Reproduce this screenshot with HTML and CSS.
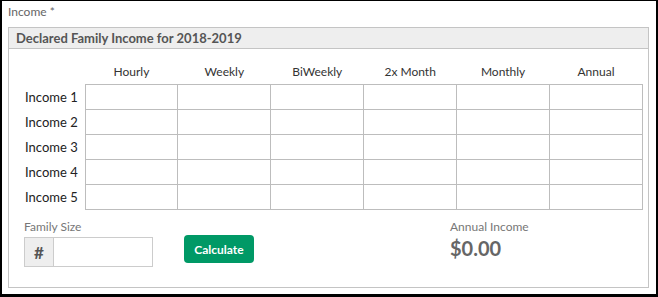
FILE: index.html
```html
<!DOCTYPE html>
<html lang="en">
<head>
    <meta charset="UTF-8">
    <meta name="viewport" content="width=device-width, initial-scale=1.0">
    <link rel="stylesheet" href="styles.css">
    <title>Income</title>
</head>
<body>
    <div class="frame">
        <div class="field-label">Income *</div>

        <div class="panel">
            <div class="panel-heading">Declared Family Income for 2018-2019</div>
            <div class="panel-body">
                <table class="income-table">
                    <thead>
                        <tr>
                            <th class="row-label"></th>
                            <th>Hourly</th>
                            <th>Weekly</th>
                            <th>BiWeekly</th>
                            <th>2x Month</th>
                            <th>Monthly</th>
                            <th>Annual</th>
                        </tr>
                    </thead>
                    <tbody id="income-rows"></tbody>
                </table>

                <div class="calc-row">
                    <div class="family-size">
                        <div class="small-label">Family Size</div>
                        <div class="input-group">
                            <span class="addon">#</span>
                            <input type="text" class="size-input">
                        </div>
                    </div>
                    <div class="calc-btn-wrap">
                        <button class="calc-btn">Calculate</button>
                    </div>
                    <div class="annual">
                        <div class="small-label">Annual Income</div>
                        <div class="annual-value">$0.00</div>
                    </div>
                </div>
            </div>
        </div>
    </div>

    <script>
        const rows = document.getElementById('income-rows');

        for (let i = 1; i <= 5; i++) {
            const tr = document.createElement('tr');
            const th = document.createElement('th');
            th.classList.add('row-label');
            th.textContent = `Income ${i}`;
            tr.appendChild(th);

            for (let j = 0; j < 6; j++) {
                const td = document.createElement('td');
                td.classList.add('cell');
                tr.appendChild(td);
            }
            rows.appendChild(tr);
        }
    </script>
</body>
</html>
```

FILE: styles.css
```css
body {
    margin: 0;
    padding: 0;
    background-color: #000;
    font-family: 'Lato', 'Liberation Sans', sans-serif;
}

.frame {
    margin: 1px 2px 3px 2px;
    height: 293px;
    box-sizing: border-box;
    background-color: #fff;
    padding: 3px 7px 0 6px;
}

.field-label {
    font-size: 12px;
    line-height: 16px;
    height: 16px;
    color: #666;
    margin-bottom: 7px;
}

.panel {
    border: 1px solid #c4c4c4;
    height: 261px;
    box-sizing: border-box;
}

.panel-heading {
    background-color: #eee;
    border-bottom: 1px solid #c4c4c4;
    height: 20px;
    line-height: 20px;
    padding-left: 7px;
    font-size: 13px;
    font-weight: 700;
    color: #555;
}

.panel-body {
    padding: 15px 6px 0 16px;
}

.income-table {
    border-collapse: collapse;
    width: 618px;
    table-layout: fixed;
}

.income-table thead th {
    font-size: 12px;
    font-weight: 400;
    color: #333;
    height: 16px;
    line-height: 16px;
    padding: 0 0 4px 0;
    text-align: center;
}

.income-table .row-label {
    width: 60px;
    padding: 0;
    text-align: left;
    font-size: 13px;
    font-weight: 400;
    color: #222;
}

.cell {
    border: 1px solid #bdbdbd;
    height: 24px;
    padding: 0;
}

.calc-row {
    display: flex;
    margin-top: 10px;
    margin-left: -1px;
}

.family-size {
    width: 160px;
}

.small-label {
    font-size: 12px;
    line-height: 14px;
    color: #777;
    margin-bottom: 3px;
}

.input-group {
    display: flex;
    width: 129px;
    height: 30px;
    border: 1px solid #ccc;
    box-sizing: border-box;
}

.addon {
    width: 28px;
    background-color: #eee;
    border-right: 1px solid #ccc;
    display: flex;
    align-items: center;
    justify-content: center;
    font-size: 17px;
    font-weight: 700;
    color: #555;
}

.size-input {
    flex: 1;
    min-width: 0;
    border: none;
    outline: none;
    padding: 0 6px;
}

.calc-btn-wrap {
    width: 266px;
    padding-top: 15px;
}

.calc-btn {
    width: 70px;
    height: 28px;
    background-color: #009966;
    color: #fff;
    border: none;
    border-radius: 4px;
    font-family: 'Lato', 'Liberation Sans', sans-serif;
    font-size: 12px;
    font-weight: 700;
    cursor: pointer;
}

.annual-value {
    font-size: 20px;
    font-weight: 700;
    color: #666;
    line-height: 22px;
}
```
